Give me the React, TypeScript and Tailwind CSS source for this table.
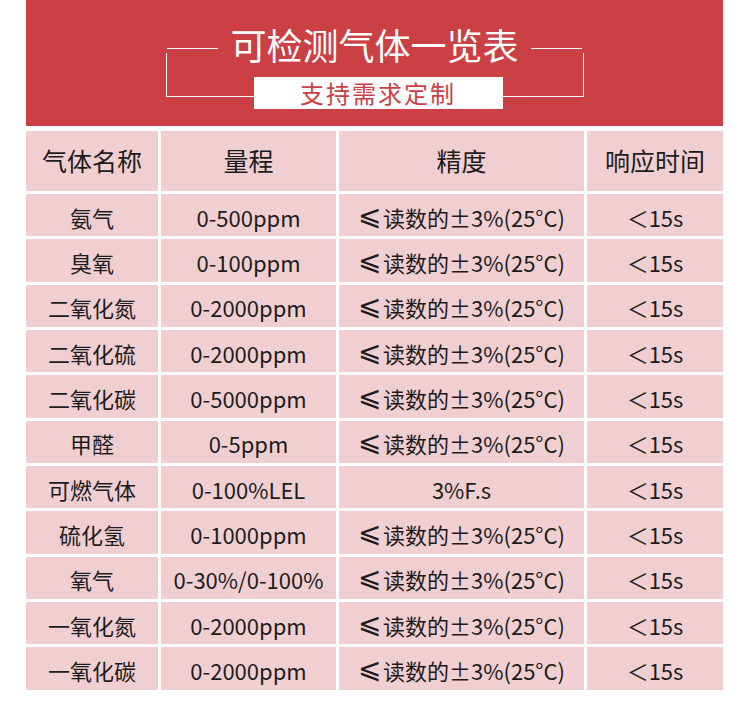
const ACC = "读数的±3%(25°C)";

const rows: [string, string, string | null][] = [
  ["氨气", "0-500ppm", ACC],
  ["臭氧", "0-100ppm", ACC],
  ["二氧化氮", "0-2000ppm", ACC],
  ["二氧化硫", "0-2000ppm", ACC],
  ["二氧化碳", "0-5000ppm", ACC],
  ["甲醛", "0-5ppm", ACC],
  ["可燃气体", "0-100%LEL", null],
  ["硫化氢", "0-1000ppm", ACC],
  ["氧气", "0-30%/0-100%", ACC],
  ["一氧化氮", "0-2000ppm", ACC],
  ["一氧化碳", "0-2000ppm", ACC],
];

const font = { fontFamily: '"Noto Sans CJK SC", "DejaVu Sans", sans-serif' };

const Cell = ({ children, head }: { children: React.ReactNode; head?: boolean }) => (
  <div
    className={`bg-[#f1cfd1] flex items-center justify-center text-[#1c1c1c] ${
      head ? "text-[25px]" : "text-[22px] pt-1"
    }`}
  >
    {children}
  </div>
);

export default function App() {
  return (
    <div className="w-[750px] h-[722px] bg-white pl-[26px] pr-[27px]" style={font}>
      <div className="bg-[#ca4044] h-[126px] flex flex-col items-center pt-[23px]">
        <div className="flex items-center gap-3">
          <div className="w-[51px] h-px bg-white mt-2" />
          <h1 className="text-white text-[36px] leading-[42px]">可检测气体一览表</h1>
          <div className="w-[51px] h-px bg-white mt-2" />
        </div>
        <div className="flex items-end -mt-[12px]">
          <div className="w-[88px] h-[44px] border-l border-b border-white mb-[12px]" />
          <div className="w-[249px] h-[32px] bg-white text-[#ca4044] text-[24px] tracking-[2px] flex items-center justify-center leading-none">
            支持需求定制
          </div>
          <div className="w-[81px] h-[44px] border-r border-b border-white mb-[12px]" />
        </div>
      </div>
      <div className="mt-[5px] grid grid-cols-[132px_175px_245px_136px] gap-[3px] grid-rows-[60px] auto-rows-[42.35px]">
        <Cell head>气体名称</Cell>
        <Cell head>量程</Cell>
        <Cell head>精度</Cell>
        <Cell head>响应时间</Cell>
        {rows.map(([name, range, acc]) => (
          <>
            <Cell key={name + "a"}>{name}</Cell>
            <Cell key={name + "b"}>{range}</Cell>
            <Cell key={name + "c"}>
              {acc ? (
                <>
                  <span
                    className="text-[28px] leading-none -mt-[3px] mr-[2px] font-extralight"
                    style={{ fontFamily: '"DejaVu Sans ExtraLight", "DejaVu Sans", sans-serif' }}
                  >
                    ⩽
                  </span>
                  {acc}
                </>
              ) : (
                "3%F.s"
              )}
            </Cell>
            <Cell key={name + "d"}>＜15s</Cell>
          </>
        ))}
      </div>
    </div>
  );
}
